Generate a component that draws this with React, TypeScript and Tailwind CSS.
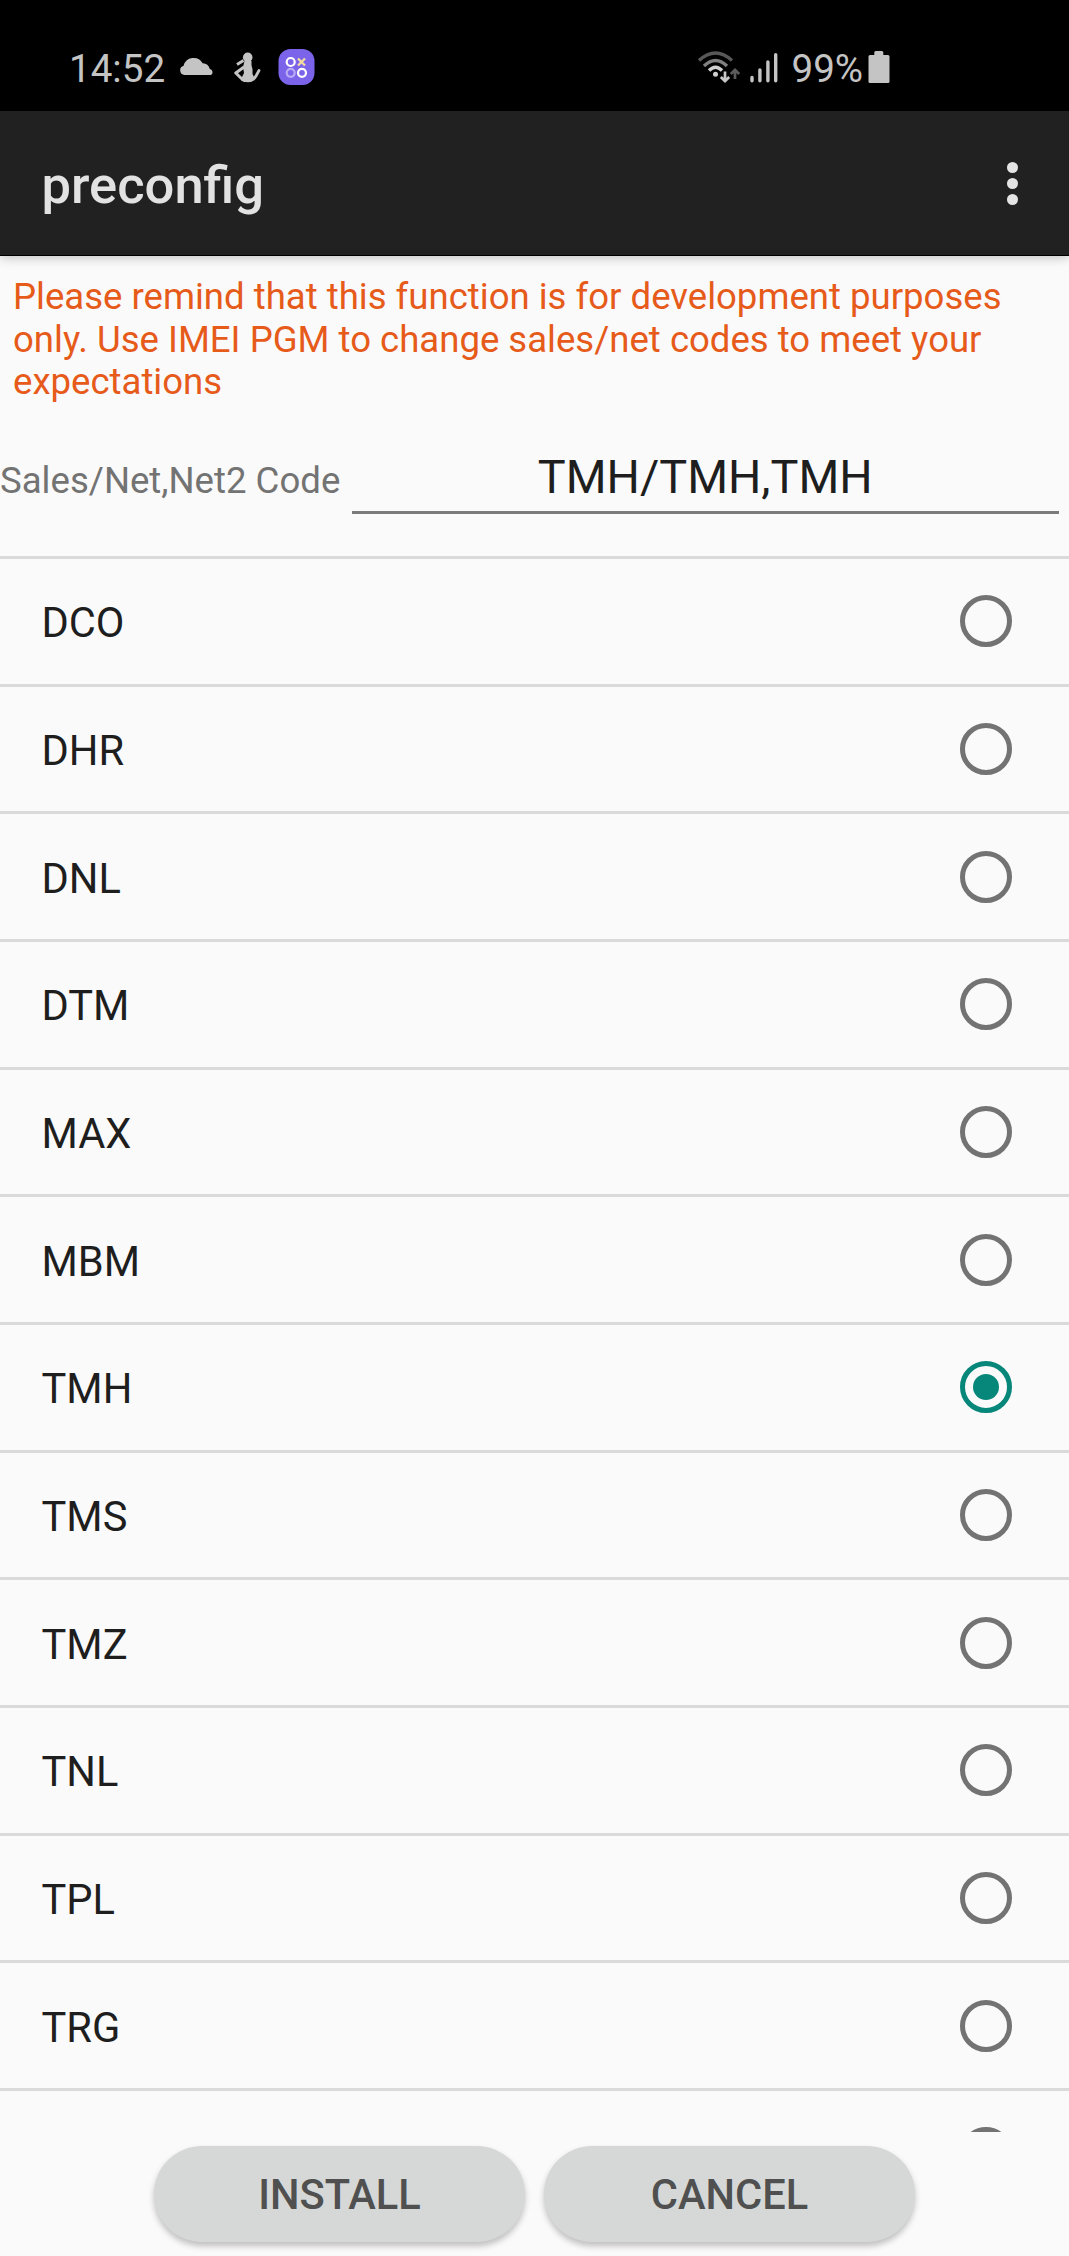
import React from "react";

const codes = ["DCO", "DHR", "DNL", "DTM", "MAX", "MBM", "TMH", "TMS", "TMZ", "TNL", "TPL", "TRG", ""];

function CloudIcon() {
  return (
    <svg className="ml-[15px] mt-[57px] shrink-0" width="34" height="18" viewBox="0 0 34 18" fill="#c4c4c4">
      <path d="M4.500 18A4.700 4.700 0 0 1 3.600 8.800A10.300 10.300 0 0 1 22.600 6.200A7 7 0 0 1 29.800 12A3.300 3.300 0 0 1 31 18Z" />
    </svg>
  );
}

function FigureIcon() {
  return (
    <svg className="ml-[19.500px] mt-[52px] shrink-0" width="27" height="31" viewBox="0 0 27 31" fill="none" stroke="#c4c4c4">
      <circle cx="13.700" cy="5.400" r="4.800" fill="#c4c4c4" stroke="none" />
      <path d="M9.500 8.500L3 12.500" strokeWidth="3" />
      <path d="M10 15L1.800 21L9 28" strokeWidth="3" strokeLinejoin="round" />
      <path d="M10.500 9H17.500V13.500L18.500 17V22L20.500 26L17 30H10L7 27L10 21L9 15Z" fill="#c4c4c4" stroke="none" />
      <path d="M9 28Q18 31 22 24L25 18.500" strokeWidth="2.800" strokeLinecap="round" />
    </svg>
  );
}

function AppBadge() {
  return (
    <svg className="ml-[17px] mt-[49px] shrink-0" width="37" height="36" viewBox="0 0 37 36" fill="none">
      <rect x="0.500" width="36" height="36" rx="12" fill="#7b64ea" />
      <g strokeWidth="2.200">
        <circle cx="12.700" cy="13" r="4" stroke="#fff" />
        <circle cx="12.700" cy="23.800" r="4" stroke="#b9acf5" />
        <circle cx="24" cy="23.800" r="4" stroke="#fff" />
        <path d="M20 9.500L27 16.500M27 9.500L20 16.500" stroke="#f3de9c" />
      </g>
    </svg>
  );
}

function WifiIcon() {
  return (
    <svg className="mt-[49px] shrink-0" width="44" height="36" viewBox="0 0 44 36" fill="none">
      <path d="M2 11.500Q18.500-3.500 35 11.500" stroke="#585858" strokeWidth="3.400" />
      <path d="M7 17Q18.500 6 30 17" stroke="#808080" strokeWidth="3.400" />
      <path d="M12 21.500Q18.500 15 25 21.500" stroke="#d0d0d0" strokeWidth="3.400" />
      <circle cx="18.500" cy="25.300" r="2.500" fill="#d0d0d0" />
      <path d="M28 22.500V32M23.800 28L28 32.200L32.200 28" stroke="#c8c8c8" strokeWidth="2.700" />
      <path d="M38 30V21M33.800 25L38 20.800L42.200 25" stroke="#5c5c5c" strokeWidth="2.700" />
    </svg>
  );
}

function SignalIcon() {
  return (
    <svg className="ml-[9px] mt-[52px] shrink-0" width="28" height="31" viewBox="0 0 28 31" stroke="#c4c4c4" strokeWidth="3.400" strokeLinecap="round">
      <path d="M2 25.500V28.700M9.900 18V28.700M17.900 10V28.700M25.700 2.800V28.700" />
    </svg>
  );
}

function BatteryIcon() {
  return (
    <svg className="ml-[4px] mt-[51px] shrink-0" width="22" height="32" viewBox="0 0 22 32" fill="#c4c4c4">
      <rect x="6.300" width="9" height="8" rx="1.500" />
      <rect x="0.500" y="4" width="21" height="28" rx="1.500" />
    </svg>
  );
}

function Radio({ checked }: { checked: boolean }) {
  return checked ? (
    <span className="flex size-[52px] items-center justify-center rounded-full border-[5px] border-[#07867a]">
      <span className="size-[26px] rounded-full bg-[#07867a]" />
    </span>
  ) : (
    <span className="size-[52px] rounded-full border-[5px] border-[#737373]" />
  );
}

export default function App() {
  return (
    <div className="flex h-[2256px] w-[1069px] flex-col overflow-hidden bg-[#fafafa] font-[Roboto,sans-serif]">
      <div className="flex h-[111px] shrink-0 items-start bg-black text-[38.6px] leading-[46px] text-[#c4c4c4]">
        <span className="ml-[69px] mt-[46px] w-[96px] whitespace-nowrap">14:52</span>
        <CloudIcon />
        <FigureIcon />
        <AppBadge />
        <div className="ml-[382px] flex items-start">
          <WifiIcon />
          <SignalIcon />
          <span className="ml-[14px] mt-[46px] w-[72px] whitespace-nowrap">99%</span>
          <BatteryIcon />
        </div>
      </div>

      <header className="relative z-10 flex h-[145px] shrink-0 items-center justify-between border-b border-black bg-[#212121] pl-[41.500px] pr-[51.500px] shadow-[0_2px_10px_rgba(0,0,0,0.22)]">
        <h1 className="mt-[5px] text-[52.500px] font-medium leading-[61px] text-[#e2e2e2]">preconfig</h1>
        <div className="mt-[1px] flex flex-col gap-[4.600px]">
          <span className="size-[11px] rounded-full bg-[#e4e4e4]" />
          <span className="size-[11px] rounded-full bg-[#e4e4e4]" />
          <span className="size-[11px] rounded-full bg-[#e4e4e4]" />
        </div>
      </header>

      <p className="h-[183px] shrink-0 whitespace-nowrap pl-[13px] pt-[20px] text-[36.560px] leading-[42.660px] text-[#e65a1a]">
        Please remind that this function is for development purposes
        <br />
        only. Use IMEI PGM to change sales/net codes to meet your
        <br />
        expectations
      </p>

      <div className="flex h-[117px] shrink-0 items-start">
        <label className="mt-[20px] w-[351.500px] whitespace-nowrap text-[36.600px] leading-[43px] text-[#737373]">Sales/Net,Net2 Code</label>
        <div className="flex h-[75px] w-[707.500px] justify-center border-b-[3px] border-[#7b7b7b] pt-[11px] text-[46.800px] leading-[55px] text-[#1e1e1e]">
          TMH/TMH,TMH
        </div>
      </div>

      <ul className="h-[1575.500px] shrink-0 overflow-hidden">
        {codes.map((code, i) => (
          <li key={i} className="flex h-[127.667px] justify-between border-t-[3px] border-[#dadada] pl-[41.500px] pr-[57px]">
            <span className="mt-[39.400px] text-[41.600px] leading-[49px] text-[#1e1e1e]">{code}</span>
            <span className="mt-[36.300px]">
              <span className="flex"><Radio checked={code === "TMH"} /></span>
            </span>
          </li>
        ))}
      </ul>

      <div className="flex shrink-0 gap-[19px] pl-[154px] pt-[14.500px]">
        {["INSTALL", "CANCEL"].map((label) => (
          <button
            key={label}
            className="h-[95.500px] w-[371px] rounded-[48px] bg-[#d6d8d7] pt-[2px] text-[41.600px] font-medium leading-[49px] text-[#4f504f] shadow-[0_4px_6px_rgba(0,0,0,0.24)]"
          >
            {label}
          </button>
        ))}
      </div>
    </div>
  );
}
